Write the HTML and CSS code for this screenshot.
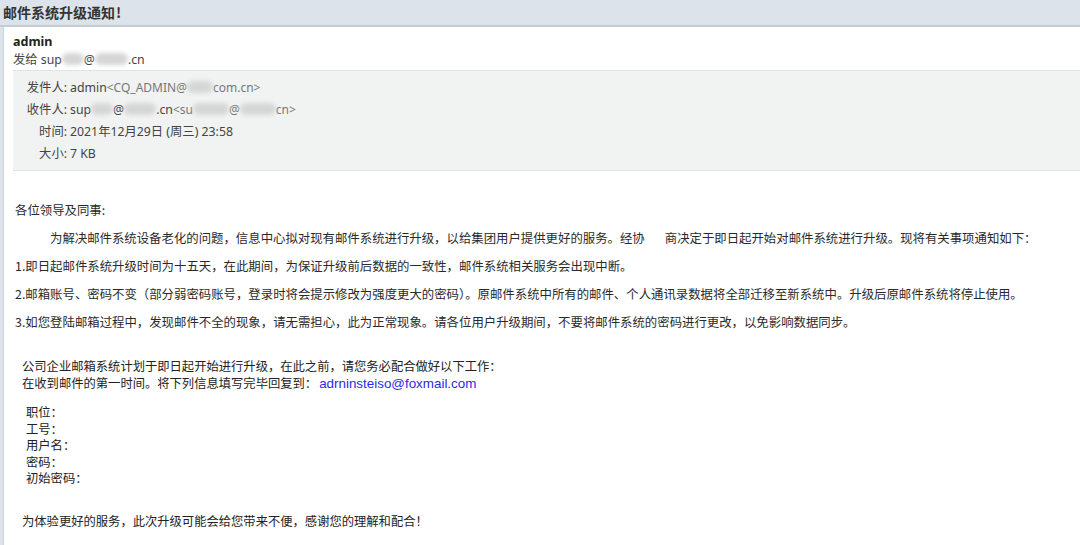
FILE: index.html
```html
<!DOCTYPE html>
<html lang="zh">
<head>
<meta charset="utf-8">
<link rel="stylesheet" href="styles.css">
</head>
<body>
<div class="page">
  <div class="titlebar">邮件系统升级通知<span class="bang">!</span></div>
  <div class="panel">
    <div class="sender">
      <div class="from-name">admin</div>
      <div class="to-line">发给 sup<span class="blur w22"></span>@<span class="blur w33"></span>.cn</div>
    </div>
    <div class="meta">
      <div class="row"><span class="lbl">发件人:</span><span class="val">admin<span class="addr">&lt;CQ_ADMIN@<span class="blur w26"></span>com.cn&gt;</span></span></div>
      <div class="row"><span class="lbl">收件人:</span><span class="val">sup<span class="blur w22"></span>@<span class="blur w32"></span>.cn<span class="addr">&lt;su<span class="blur w36"></span>@<span class="blur w36"></span>cn&gt;</span></span></div>
      <div class="row"><span class="lbl">时间:</span><span class="val">2021年12月29日 (周三) 23:58</span></div>
      <div class="row"><span class="lbl">大小:</span><span class="val">7 KB</span></div>
    </div>
    <div class="body">
      <p class="l">各位领导及同事:</p>
      <p class="l indent">为解决邮件系统设备老化的问题，信息中心拟对现有邮件系统进行升级，以给集团用户提供更好的服务。经协<span class="gap"></span>商决定于即日起开始对邮件系统进行升级。现将有关事项通知如下：</p>
      <p class="l">1.即日起邮件系统升级时间为十五天，在此期间，为保证升级前后数据的一致性，邮件系统相关服务会出现中断。</p>
      <p class="l">2.邮箱账号、密码不变（部分弱密码账号，登录时将会提示修改为强度更大的密码）。原邮件系统中所有的邮件、个人通讯录数据将全部迁移至新系统中。升级后原邮件系统将停止使用。</p>
      <p class="l">3.如您登陆邮箱过程中，发现邮件不全的现象，请无需担心，此为正常现象。请各位用户升级期间，不要将邮件系统的密码进行更改，以免影响数据同步。</p>
    </div>
    <div class="notice">
      <div class="nl">公司企业邮箱系统计划于即日起开始进行升级，在此之前，请您务必配合做好以下工作：</div>
      <div class="nl">在收到邮件的第一时间。将下列信息填写完毕回复到：<a class="link">adrninsteiso@foxmail.com</a></div>
      <div class="fields">
        <div class="nl">职位：</div>
        <div class="nl">工号：</div>
        <div class="nl">用户名：</div>
        <div class="nl">密码：</div>
        <div class="nl">初始密码：</div>
      </div>
      <div class="nl thanks">为体验更好的服务，此次升级可能会给您带来不便，感谢您的理解和配合！</div>
    </div>
  </div>
</div>
</body>
</html>
```
FILE: styles.css
```css
html, body {
  margin: 0;
  padding: 0;
}
body {
  width: 1080px;
  height: 545px;
  overflow: hidden;
  background: #dce3ea;
  font-family: "Noto Sans", "Noto Sans CJK SC", sans-serif;
  color: #333;
}
.page {
  display: flex;
  flex-direction: column;
}
.titlebar {
  height: 27px;
  box-sizing: border-box;
  padding: 2px 0 0 3px;
  font-family: "Noto Sans CJK SC", sans-serif;
  font-weight: 700;
  font-size: 14px;
  line-height: 20px;
  color: #333;
  border-bottom: 2px solid #c5cdd3;
}
.titlebar .bang {
  margin-left: 1px;
}
.panel {
  margin-left: 3px;
  background: #fff;
  border-left: 1px solid #cfd4d8;
  height: 520px;
  overflow: hidden;
}
.sender {
  padding: 6px 0 0 9px;
  height: 37px;
}
.from-name {
  font-weight: 700;
  font-size: 12.5px;
  line-height: 18px;
  color: #222;
}
.to-line {
  font-size: 12.3px;
  line-height: 18px;
  color: #444;
}
.blur {
  display: inline-block;
  height: 12px;
  background: #d6d6d6;
  border-radius: 7px;
  vertical-align: -1px;
  filter: blur(2px);
}
.w22 { width: 22px; }
.w26 { width: 26px; }
.w32 { width: 32px; }
.w33 { width: 33px; }
.w36 { width: 36px; }
.meta {
  margin-left: 9px;
  background: #f0f3f2;
  border-top: 1px solid #e2e4e4;
  border-bottom: 1px solid #e2e4e4;
  padding: 6px 0 4px 0;
  height: 89px;
}
.row {
  display: flex;
  font-size: 12.3px;
  line-height: 22px;
  color: #444;
}
.lbl {
  width: 54px;
  text-align: right;
  flex: none;
}
.val {
  margin-left: 3px;
}
.addr {
  color: #777;
  font-size: 12px;
}
.body {
  padding: 25px 0 0 11px;
  font-family: "Noto Sans CJK SC", sans-serif;
  font-size: 12.4px;
  color: #2a2a2a;
}
.body .l {
  margin: 0;
  line-height: 28px;
  white-space: nowrap;
}
.body .indent {
  padding-left: 35px;
}
.gap {
  display: inline-block;
  width: 20px;
}
.notice {
  padding: 22px 0 0 18px;
  font-family: "Noto Sans CJK SC", sans-serif;
  font-size: 12.3px;
  color: #222;
}
.nl {
  line-height: 16.5px;
  white-space: nowrap;
}
.link {
  color: #2a2ae6;
  font-family: "Liberation Sans", "Noto Sans", sans-serif;
  font-size: 13.4px;
  margin-left: 2px;
}
.fields {
  padding: 12px 0 0 4px;
}
.thanks {
  margin-top: 26px;
}
```
